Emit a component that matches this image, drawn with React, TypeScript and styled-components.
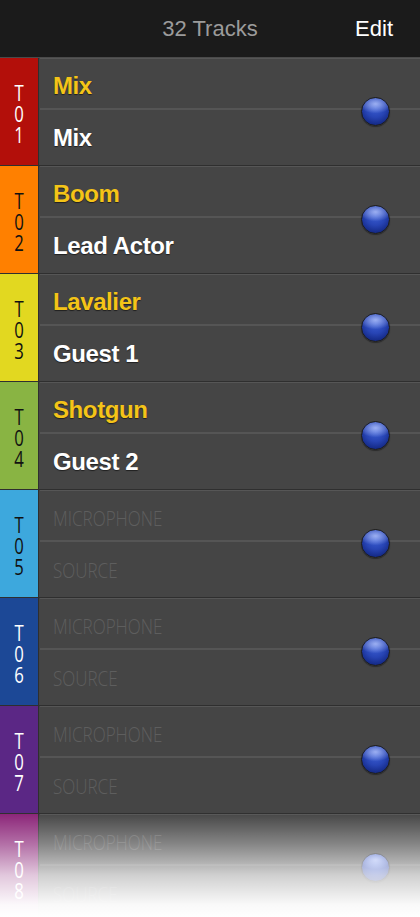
import styled, { createGlobalStyle } from "styled-components";

interface Track {
  id: string;
  color: string;
  dark: boolean;
  mic?: string;
  source?: string;
}

const GlobalStyle = createGlobalStyle`
  html, body {
    margin: 0;
    padding: 0;
    background: #444444;
  }
  #root {
    height: 917px;
    overflow: hidden;
  }
`;

const Screen = styled.div`
  position: relative;
  width: 420px;
  height: 917px;
  overflow: hidden;
  background: #454545;
  font-family: "Liberation Sans", Arial, sans-serif;
`;

const Header = styled.div`
  height: 57px;
  border-bottom: 1px solid #4a4a4a;
  background: #1b1b1b;
  display: grid;
  grid-template-columns: 1fr auto 1fr;
  align-items: center;
  font-size: 22px;
`;

const Title = styled.div`
  grid-column: 2;
  color: #9b9b9b;
`;

const EditButton = styled.div`
  justify-self: end;
  padding-right: 27px;
  color: #ffffff;
`;

const Row = styled.div`
  height: 108px;
  display: grid;
  grid-template-columns: 39px 1fr;
  border-bottom: 1px solid #2f2f2f;
  box-sizing: border-box;
`;

const Strip = styled.div<{ $color: string; $dark: boolean }>`
  background: ${(p) => p.$color};
  border-right: 1px solid #2f2f2f;
  display: flex;
  align-items: center;
  justify-content: center;
  color: ${(p) => (p.$dark ? "#111111" : "#ffffff")};
  font-family: "Open Sans", sans-serif;
  font-weight: 400;
  font-size: 22px;
`;

const StripId = styled.span`
  display: block;
  writing-mode: vertical-lr;
  text-orientation: upright;
  letter-spacing: -9px;
  line-height: 1;
  transform: scaleX(0.76);
  padding-bottom: 7px;
`;

const Content = styled.div`
  position: relative;
  display: flex;
  flex-direction: column;
  border-top: 1px solid #565656;
  margin-left: 1px;
`;

const Half = styled.div<{ $top?: boolean }>`
  display: flex;
  align-items: center;
  padding-left: 13px;
  box-sizing: border-box;
  height: ${(p) => (p.$top ? "51px" : "auto")};
  flex: ${(p) => (p.$top ? "none" : "1")};
  padding-top: ${(p) => (p.$top ? "4px" : "0")};
  border-bottom: ${(p) => (p.$top ? "2px solid #555555" : "none")};
`;

const Label = styled.span<{ $yellow?: boolean }>`
  font-weight: 700;
  font-size: 24px;
  letter-spacing: -0.4px;
  color: ${(p) => (p.$yellow ? "#f4c418" : "#ffffff")};
  text-shadow: 0 1px 1px rgba(0, 0, 0, 0.55);
`;

const Placeholder = styled.span`
  display: inline-block;
  font-family: "Open Sans", sans-serif;
  font-weight: 300;
  font-size: 21px;
  color: #5e5e5e;
  transform: scaleX(0.81);
  transform-origin: left center;
`;

const Ball = styled.div`
  position: absolute;
  right: 30px;
  top: 50%;
  width: 27px;
  height: 27px;
  margin-top: -15px;
  border-radius: 50%;
  border: 1.5px solid #1c1c1c;
  background:
    radial-gradient(ellipse 60% 35% at 50% 22%, rgba(190, 205, 255, 0.75), rgba(190, 205, 255, 0) 100%),
    radial-gradient(circle at 50% 35%, #3c5fd4 0%, #2744b4 45%, #162c8a 75%, #0b1857 100%);
  box-shadow: 0 1px 1px rgba(0, 0, 0, 0.4);
`;

const Fade = styled.div`
  position: absolute;
  left: 0;
  right: 0;
  bottom: 0;
  height: 104px;
  background: linear-gradient(
    to bottom,
    rgba(255, 255, 255, 0) 0%,
    rgba(255, 255, 255, 0.35) 30%,
    rgba(255, 255, 255, 0.75) 60%,
    rgba(255, 255, 255, 0.97) 88%,
    #ffffff 100%
  );
  pointer-events: none;
`;

const tracks: Track[] = [
  { id: "T01", color: "#b30f0a", dark: false, mic: "Mix", source: "Mix" },
  { id: "T02", color: "#ff8000", dark: true, mic: "Boom", source: "Lead Actor" },
  { id: "T03", color: "#e2d820", dark: true, mic: "Lavalier", source: "Guest 1" },
  { id: "T04", color: "#89b443", dark: true, mic: "Shotgun", source: "Guest 2" },
  { id: "T05", color: "#3da8dd", dark: true },
  { id: "T06", color: "#1c4896", dark: false },
  { id: "T07", color: "#5b2785", dark: false },
  { id: "T08", color: "#8b2478", dark: false },
];

const TrackRow = ({ track }: { track: Track }) => (
  <Row>
    <Strip $color={track.color} $dark={track.dark}>
      <StripId>{track.id}</StripId>
    </Strip>
    <Content>
      <Half $top>
        {track.mic ? <Label $yellow>{track.mic}</Label> : <Placeholder>MICROPHONE</Placeholder>}
      </Half>
      <Half>
        {track.source ? <Label>{track.source}</Label> : <Placeholder>SOURCE</Placeholder>}
      </Half>
      <Ball />
    </Content>
  </Row>
);

export default function App() {
  return (
    <Screen>
      <GlobalStyle />
      <Header>
        <Title>32 Tracks</Title>
        <EditButton>Edit</EditButton>
      </Header>
      {tracks.map((t) => (
        <TrackRow key={t.id} track={t} />
      ))}
      <Fade />
    </Screen>
  );
}
